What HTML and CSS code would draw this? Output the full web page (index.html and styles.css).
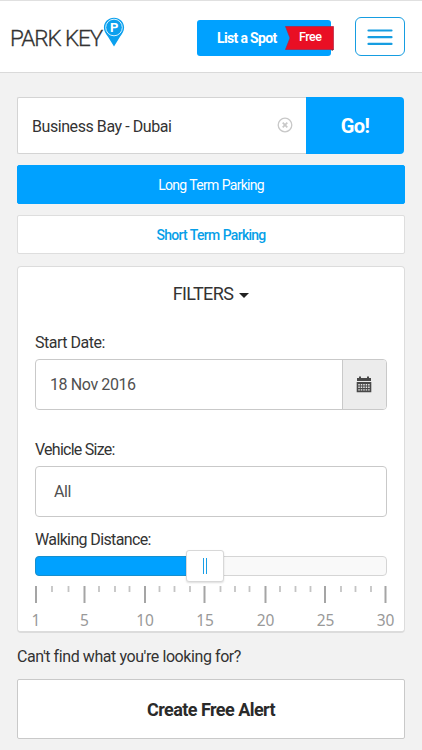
FILE: index.html
```html
<!DOCTYPE html>
<html lang="en">
<head>
<meta charset="utf-8">
<title>Park Key</title>
<link rel="stylesheet" href="styles.css">
</head>
<body>
<header class="header">
  <a class="logo"><span class="logo-text">PARK KEY</span><svg class="pin" width="22" height="30" viewBox="0 0 22 30"><path d="M11 .7C5.3.7.9 5.100.9 10.500c0 3.500 1.800 6.200 4.100 9.200L11 29.500l6-9.800c2.300-3 4.100-5.700 4.100-9.200C21.100 5.100 16.700.7 11 .7z" fill="#0aa0ee"/><circle cx="11" cy="10.500" r="8.300" fill="none" stroke="#d7f2ff" stroke-width="1"/><text class="pin-p" x="11.200" y="15" text-anchor="middle">P</text></svg></a>
  <a class="list-spot"><span class="list-text">List a Spot</span>
    <span class="ribbon"><svg class="ribbon-bg" width="49" height="25" viewBox="0 0 49 25"><path d="M46 23h3l-2 2z" fill="#17162b"/><path d="M.5.500H48.500V23.500H.5L5 12z" fill="#e90f24" stroke="#b3213f" stroke-width=".7"/></svg><span class="free">Free</span></span>
  </a>
  <button class="menu" aria-label="Menu"><svg width="26" height="18" viewBox="0 0 26 18"><path d="M1.500 2.500h23M1.500 9.200h23M1.500 15.900h23" stroke="#169de1" stroke-width="2.200" stroke-linecap="round"/></svg></button>
</header>
<main class="main">
  <form class="search">
    <div class="place"><span class="place-text">Business Bay - Dubai</span><svg width="16" height="16" viewBox="0 0 16 16" fill="none" stroke="#c8c8c8"><circle cx="8" cy="8" r="6.800" stroke-width="1.300"/><path d="M5.700 5.700l4.600 4.600M10.300 5.700l-4.600 4.600" stroke-width="1.700"/></svg></div>
    <div class="go"><span>Go!</span></div>
  </form>
  <div class="term active"><span class="long">Long Term Parking</span></div>
  <div class="term"><span class="short">Short Term Parking</span></div>
  <section class="filters">
    <h2><span class="filters-text">FILTERS</span><i class="caret"></i></h2>
    <label class="label start">Start Date:</label>
    <div class="field date"><span class="date-text">18 Nov 2016</span><div class="addon"><svg width="16" height="17" viewBox="0 0 16 17"><path d="M1 2h2V.6h2V2h6V.6h2V2h2v3H1z" fill="#484848"/><path d="M.7 6h14.600v10.300H.7z" fill="#484848"/><path d="M2.300 8.700h11.500M2.300 11.300h11.500M2.300 13.900h11.500" stroke="#e8e8e8" stroke-width="1.400" stroke-dasharray="1.500 .960"/></svg></div></div>
    <label class="label vehicle">Vehicle Size:</label>
    <div class="field size"><span>All</span></div>
    <label class="label walking">Walking Distance:</label>
    <div class="slider"><div class="fill"></div><div class="handle"><i></i><i></i></div></div>
    <svg class="scale" width="386" height="46" viewBox="18 586 386 46">
      <path d="M36 586v17M84.500 586v17M145 586v17M204.500 586v17M265.500 586v17M325 586v17M385.500 586v17" stroke="#a5a5a5" stroke-width="2"/>
      <path d="M52 586v6M68.500 586v6M99 586v6M115 586v6M129.500 586v6M159.500 586v6M174.500 586v6M190 586v6M220.500 586v6M235 586v6M249.500 586v6M280 586v6M295.500 586v6M310.500 586v6M341 586v6M355.500 586v6M371 586v6" stroke="#c4c4c4" stroke-width="1.800"/>
      <g text-anchor="middle"><text x="36" y="626">1</text><text x="84.500" y="626">5</text><text x="145" y="626">10</text><text x="205" y="626">15</text><text x="265.500" y="626">20</text><text x="325.500" y="626">25</text><text x="385.500" y="626">30</text></g>
    </svg>
  </section>
  <p class="question">Can't find what you're looking for?</p>
  <div class="alert"><span>Create Free Alert</span></div>
</main>
</body>
</html>
```
FILE: styles.css
```css
* { box-sizing: border-box; }
body { margin: 0; background: #f2f2f2; color: #333; font: 16px/20px Roboto, "Liberation Sans", sans-serif; height: 750px; overflow: hidden; }
span, label, p { white-space: nowrap; }
.header { height: 73px; background: #fff; border-top: 1px solid #e0e0e0; border-bottom: 1px solid #dadada; display: flex; align-items: flex-start; }
.logo { display: flex; width: 197px; padding: 16px 0 0 9px; }
.logo-text { width: 94px; font-size: 22.5px; line-height: 43px; font-weight: 300; letter-spacing: -1.1px; padding-left: 1px; -webkit-text-stroke: .3px #333; }
.pin-p { font: bold 13px Roboto, sans-serif; fill: #fff; }
.list-spot { position: relative; width: 134px; height: 36px; margin: 19px 24px 0 0; padding: 8px 0 0 20px; background: #00a1ff; border-radius: 3px; color: #fff; font-weight: 700; font-size: 14px; }
.list-text { letter-spacing: -.65px; }
.ribbon { position: absolute; left: 88px; top: 6px; width: 49px; height: 25px; }
.ribbon-bg { position: absolute; left: 0; top: 0; }
.free { position: absolute; left: 14px; top: 1px; font-size: 12.5px; font-weight: 500; letter-spacing: -.5px; }
.menu { width: 50px; height: 39px; margin-top: 16px; border: 1px solid #169de1; border-radius: 6px; background: #fff; padding: 0; display: flex; align-items: center; justify-content: center; }
.main { padding: 24px 17px 0; }
.search { display: flex; height: 57px; width: 387px; }
.place { flex: 1; display: flex; align-items: center; justify-content: space-between; background: #fff; border: 1px solid #d4d4d4; border-right: 0; border-radius: 2px 0 0 2px; padding: 3px 13px 0 14px; }
.place-text { letter-spacing: -.43px; }
.place svg { margin-top: -4px; }
.go { width: 98px; background: #00a1ff; border-radius: 0 4px 4px 0; color: #fff; font-size: 20px; font-weight: 700; text-align: center; line-height: 59px; letter-spacing: -.6px; }
.term { height: 39px; margin-top: 11px; border: 1px solid #dedede; border-radius: 2px; background: #fff; color: #079fe8; text-align: center; line-height: 38px; font-size: 14px; font-weight: 500; }
.active { background: #00a1ff; border-color: #00a1ff; color: #fff; font-weight: 400; }
.long, .short { letter-spacing: -.73px; word-spacing: .5px; }
.filters { height: 367px; margin-top: 12px; border: 1px solid #dcdcdc; border-bottom-width: 2px; border-radius: 4px; background: #fff; padding: 0 17px; overflow: hidden; }
h2 { margin: 0; height: 65px; padding-top: 17px; display: flex; justify-content: center; align-items: flex-start; font-size: 18px; line-height: 20px; font-weight: 400; gap: 6px; }
.filters-text { letter-spacing: -.6px; }
.caret { border: 5px solid transparent; border-top-color: #222; border-bottom: 0; margin-top: 9px; }
.label { display: block; height: 27px; line-height: 22px; font-size: 16px; }
.start { letter-spacing: -.5px; }
.vehicle { letter-spacing: -.75px; }
.field { height: 51px; border: 1px solid #c9c9c9; border-radius: 4px; display: flex; align-items: center; justify-content: space-between; padding-left: 14px; color: #505050; background: #fff; letter-spacing: -.4px; }
.field span { padding-top: 1px; }
.date { margin-bottom: 29px; }
.addon { width: 44px; height: 49px; border-left: 1px solid #c9c9c9; background: #ececec; border-radius: 0 3px 3px 0; display: flex; align-items: center; justify-content: center; }
.addon svg { margin: -1px 2px 0 0; }
.size { padding-left: 18px; margin-bottom: 11px; }
.walking { height: 28px; line-height: 23px; letter-spacing: -.63px; }
.slider { position: relative; height: 20px; border: 1px solid #d5d5d5; border-radius: 4px; background: #f9f9f9; }
.fill { width: 169px; height: 20px; margin: -1px; background: #00a1ff; border: 1px solid #168fce; border-radius: 4px; }
.handle { position: absolute; left: 150px; top: -7px; width: 38px; height: 32px; background: #fff; border: 1px solid #d8d8d8; border-radius: 3px; box-shadow: 0 1px 2px #0002; display: flex; align-items: center; justify-content: center; gap: 2px; }
.handle i { width: 1px; height: 16px; background: #1a9fe7; }
.scale { display: block; margin: 10px 0 0 -17px; }
.scale text { font: 15.5px "Noto Sans", sans-serif; fill: #999; }
.question { margin: 13px 0 11px; line-height: 22px; font-size: 16px; letter-spacing: -.42px; }
.alert { height: 60px; border: 1px solid #c9c9c9; border-radius: 2px; background: #fff; text-align: center; line-height: 60px; font-size: 18px; font-weight: 700; color: #2a2a2a; letter-spacing: -.55px; }
```
